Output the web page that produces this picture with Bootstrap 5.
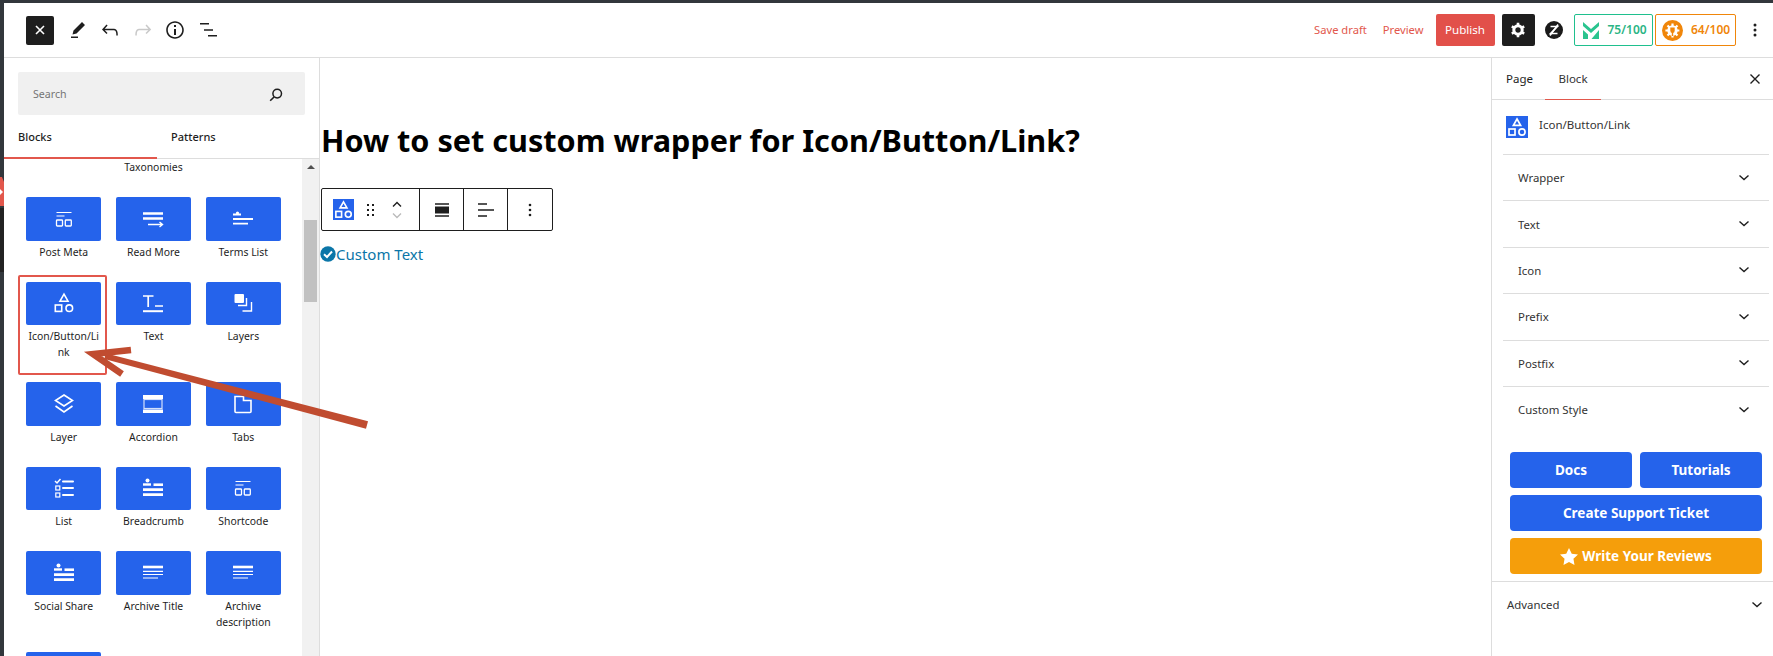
<!DOCTYPE html>
<html>
<head>
    <title>Icon/Button/Link - Editor</title>
    <link href="https://cdn.jsdelivr.net/npm/bootstrap@5.3.2/dist/css/bootstrap.min.css" rel="stylesheet">
    <style>
        html, body { height: 656px; overflow: hidden; }
        body { background: #32373c; font-family: "Noto Sans", "Liberation Sans", sans-serif; color: #1e1e1e; font-size: 12px; }
        .shell { height: 656px; position: relative; }
        .edge { width: 4px; flex: none; padding-top: 174px; }
        .edge svg { display: block; }
        .frame { background: #fff; margin-top: 3px; min-width: 0; height: 653px; }

        .topbar { height: 55px; border-bottom: 1px solid #ddd; flex: none; }
        .close-x { width: 28px; height: 29px; background: #1e1e1e; border-radius: 2px; margin: 0 12px 0 22px; }
        .tool-gap { gap: 8.4px; }
        .save-link { color: #e2574c; font-size: 11.2px; }
        .save-link.first { margin-right: 16px; }
        .save-link.second { margin-right: 12px; }
        .btn.publish { background: #e2504a; color: #fff; border: 0; width: 59px; height: 32px; padding: 0; font-size: 11.6px; border-radius: 2px; }
        .gear-btn { width: 33px; height: 32px; background: #1e1e1e; border-radius: 2px; margin-left: 7px; }
        .zeta { margin: 0 11px 0 10px; }
        .score { height: 32px; border-radius: 2px; font-weight: 600; font-size: 12px; background: #fff; border: 1px solid; }
        .score.green { width: 79px; color: #2bb585; border-color: #1fc08e; margin-right: 2.5px; padding-left: 8px; gap: 9px; }
        .score.orange { width: 81px; color: #f0860a; border-color: #f0860a; padding-left: 6px; gap: 8px; }
        .dots { width: 37px; }

        .inserter { width: 316px; flex: none; border-right: 1px solid #ddd; }
        .search-box { margin: 14px 14px 0 14px; height: 43px; background: #f0f0f0; border-radius: 2px; padding: 2px 22px 0 15px; color: #757575; font-size: 10.6px; }
        .ins-tabs { height: 44px; border-bottom: 1px solid #ddd; }
        .ins-tab { width: 153px; padding: 14px 0 0 14px; font-size: 11px; font-weight: 500; height: 44px; color: #1e1e1e; }
        .ins-tab.on { border-bottom: 2px solid #e2574c; }
        .ins-body { min-height: 0; }
        .blk-scroll { flex: 1; overflow: hidden; padding: 0 0 0 22px; }
        .blk-grid { display: grid; grid-template-columns: 75.4px 75.4px 75.4px; column-gap: 14.4px; row-gap: 21px; align-items: start; }
        .blk-tile { height: 43.5px; background: #2563eb; border-radius: 2px; }
        .blk-lbl { font-size: 10.4px; line-height: 16px; text-align: center; margin-top: 3px; height: auto; color: #1e1e1e; }
        .blk-item { padding-bottom: 1px; }
        .blk-first { margin-top: 0; height: 17px; }
        .blk-item.picked { position: relative; }
        .blk-item.picked::after { content: ""; position: absolute; left: -8px; top: -7px; width: 89px; height: 100px; border: 2px solid #e2574c; border-radius: 2px; }
        .vbar { width: 17px; flex: none; background: #f1f1f1; }
        .vbar .up { width: 0; height: 0; border: 4px solid transparent; border-top: 0; border-bottom: 4px solid #505050; margin: 6px auto 0; }
        .vbar .thumb { width: 13px; height: 82px; background: #c1c1c1; margin: 51px auto 0; }

        .canvas { min-width: 0; }
        .post-title { font-size: 30.6px; font-weight: 700; color: #000; margin: 61px 0 0 1px; line-height: 42px; }
        .blk-toolbar { margin: 27px 0 0 1px; width: 232px; height: 43px; border: 1px solid #1e1e1e; border-radius: 2px; }
        .blk-toolbar > div { border-right: 1px solid #1e1e1e; height: 100%; }
        .blk-toolbar > div:last-child { border-right: 0; }
        .tb-main { width: 98px; padding-left: 11px; }
        .tb-cell { width: 44px; }
        .grip { margin-left: 12px; }
        .arrows { width: 12px; margin-left: 15px; }
        .arrows svg { display: block; }
        .custom-txt { color: #0b76a8; font-size: 15px; margin: 13px 0 0 0; line-height: 20px; }

        .sidepanel { width: 282px; flex: none; border-left: 1px solid #ddd; }
        .side-tabs { height: 42px; border-bottom: 1px solid #ddd; flex: none; }
        .side-tab { font-size: 11.5px; height: 42px; padding-top: 12px; color: #1e1e1e; }
        .side-tab.page { margin-left: 14px; width: 39px; }
        .side-tab.blockt { width: 56px; text-align: center; border-bottom: 1.5px solid #e2574c; color: #333; }
        .side-close { margin: 0 6px 0 auto; }
        .blk-card { height: 54px; gap: 11px; padding: 0 0 0 14px; font-size: 11.5px; color: #333; }
        .blk-card span { margin-bottom: 4px; }
        .acc-row { height: 46.4px; margin: 0 4px 0 11px; border-top: 1px solid #ddd; padding: 0 19px 0 15px; font-size: 11.4px; color: #333; }
        .help-btns { padding: 0 11px 0 18px; margin-top: 20px; gap: 7px; }
        .btn.blue-btn { background: #2563eb; color: #fff; border: 0; font-size: 13.5px; font-weight: 700; height: 36px; padding: 0; border-radius: 4px; }
        .btn.amber-btn { background: #f59e0b; color: #fff; border: 0; font-size: 13.5px; font-weight: 700; height: 36px; padding: 0; border-radius: 4px; }
        .adv-row { margin-top: 7px; border-top: 1px solid #ddd; height: 46px; padding: 0 10px 0 15px; font-size: 11.4px; color: #333; }

        .big-arrow { position: absolute; left: 0; top: 0; pointer-events: none; }
    </style>
</head>
<body>
    <svg width="0" height="0" class="position-absolute">
        <defs>
            <symbol id="i-shapes" viewBox="0 0 24 24"><path d="M12 3.2 16 10.2H8Z" fill="none" stroke="#fff" stroke-width="1.6"/><rect x="3.3" y="14" width="6.4" height="6.4" fill="none" stroke="#fff" stroke-width="1.6"/><circle cx="17.3" cy="17.2" r="3.3" fill="none" stroke="#fff" stroke-width="1.6"/></symbol>
            <symbol id="i-meta" viewBox="0 0 24 24"><path d="M4.5 5.5h15M4.5 9h8" stroke="#fff" stroke-width="1.2"/><rect x="4.5" y="13" width="6" height="6" rx=".8" fill="none" stroke="#fff" stroke-width="1.3"/><rect x="13.3" y="13" width="6" height="6" rx=".8" fill="none" stroke="#fff" stroke-width="1.3"/></symbol>
            <symbol id="i-more" viewBox="0 0 24 24"><path d="M2 6.5h20M2 11.5h20" stroke="#fff" stroke-width="2.4"/><path d="M7 17.5h14M18.5 15l3 2.5-3 2.5" fill="none" stroke="#fff" stroke-width="1.4"/></symbol>
            <symbol id="i-terms" viewBox="0 0 24 24"><circle cx="6.5" cy="6" r="1.6" fill="#fff"/><path d="M2 7.500h8M2 12h20M2 16.7h15" stroke="#fff" stroke-width="1.8"/></symbol>
            <symbol id="i-text" viewBox="0 0 24 24"><path d="M2 5h10.500M7.200 5v11M14 15h8" stroke="#fff" stroke-width="1.7" fill="none"/><path d="M2 20.200h20" stroke="#fff" stroke-width="2"/></symbol>
            <symbol id="i-layers" viewBox="0 0 24 24"><rect x="3.500" y="3" width="9.500" height="9" rx="1" fill="#fff"/><path d="M15.500 7v7.500H7" fill="none" stroke="#fff" stroke-width="1.4"/><path d="M20.500 11v9H11.500" fill="none" stroke="#fff" stroke-width="1.4"/></symbol>
            <symbol id="i-layer" viewBox="0 0 24 24"><path d="M12 3 20.500 8.500 12 14 3.500 8.500Z" fill="none" stroke="#fff" stroke-width="1.6"/><path d="M3.500 14 12 20l8.500-6" fill="none" stroke="#fff" stroke-width="1.6"/></symbol>
            <symbol id="i-accordion" viewBox="0 0 24 24"><rect x="2" y="3" width="20" height="4" fill="#fff"/><rect x="3" y="7.500" width="18" height="9" fill="none" stroke="#fff" stroke-width="1.2" opacity=".8"/><rect x="2" y="17.500" width="20" height="3.500" fill="#fff"/></symbol>
            <symbol id="i-tabs" viewBox="0 0 24 24"><path d="M4 4.500h8.500v4h7.500v11c0 .6-.4 1-1 1H5c-.6 0-1-.4-1-1Z" fill="none" stroke="#fff" stroke-width="1.6"/></symbol>
            <symbol id="i-list" viewBox="0 0 24 24"><path d="M3 5l2 2 3.500-4" fill="none" stroke="#fff" stroke-width="1.5"/><rect x="3.800" y="10" width="4" height="4" fill="none" stroke="#fff" stroke-width="1.2"/><rect x="3.800" y="17" width="4" height="4" fill="none" stroke="#fff" stroke-width="1.2"/><path d="M11 5.500h10M11 12h10M11 19h10" stroke="#fff" stroke-width="2" stroke-linecap="round"/></symbol>
            <symbol id="i-crumb" viewBox="0 0 24 24"><circle cx="6.500" cy="4.500" r="2" fill="#fff"/><path d="M2 8.500h8" stroke="#fff" stroke-width="2.4"/><path d="M12.500 8.700H22" stroke="#fff" stroke-width="2.6"/><path d="M2 13.600h20M2 18.600h20" stroke="#fff" stroke-width="2.6"/></symbol>
            <symbol id="i-archive" viewBox="0 0 24 24"><path d="M2 6h20" stroke="#fff" stroke-width="2.6"/><path d="M2 10.300h20M2 13.500h20M2 17h15" stroke="#fff" stroke-width="1.2"/></symbol>
            <symbol id="i-chev" viewBox="0 0 12 8"><path d="M1.500 1.500 6 5.500l4.500-4" fill="none" stroke="#1e1e1e" stroke-width="1.4"/></symbol>
            <symbol id="i-shapes-blue" viewBox="0 0 22 22"><rect width="22" height="22" fill="#2563eb"/><path d="M11 3 14.600 9.300H7.400Z" fill="none" stroke="#fff" stroke-width="1.7"/><rect x="3" y="13" width="6" height="6" fill="none" stroke="#fff" stroke-width="1.7"/><circle cx="16" cy="16" r="3.100" fill="none" stroke="#fff" stroke-width="1.7"/></symbol>
        </defs>
    </svg>

    <div class="shell d-flex">
        <div class="edge">
            <svg width="4" height="98" viewBox="0 0 4 98"><path d="M0 3h2L4 8v24H0Z" fill="#e2574c"/><path d="M0 15l3 3-3 3Z" fill="#fff"/><rect y="34" width="4" height="64" fill="#222"/></svg>
        </div>
        <div class="frame flex-grow-1 d-flex flex-column">
            <div class="topbar d-flex align-items-center">
                <div class="close-x d-flex align-items-center justify-content-center">
                    <svg width="10" height="10" viewBox="0 0 10 10"><path d="M1 1l8 8M9 1l-8 8" stroke="#fff" stroke-width="1.6"/></svg>
                </div>
                <div class="d-flex align-items-center tool-gap">
                    <svg width="24" height="24" viewBox="0 0 24 24"><path fill="#1e1e1e" d="m19 7-3-3-8.500 8.500-1 4 4-1L19 7Zm-7 11.500H5V20h7v-1.500Z"/></svg>
                    <svg width="24" height="24" viewBox="0 0 24 24"><path fill="#1e1e1e" d="M18.300 11.700c-.6-.6-1.400-.9-2.300-.9H6.700l2.900-3.300-1.100-1-4.500 5L8.500 16l1-1-2.700-2.700H16c.5 0 .9.2 1.300.5 1 1 1 3.400 1 4.500v.3h1.500v-.2c0-1.500 0-4.300-1.500-5.700z"/></svg>
                    <svg width="24" height="24" viewBox="0 0 24 24"><path fill="#c9c9c9" d="M15.600 6.500l-1.100 1 2.900 3.300H8c-.9 0-1.700.3-2.300.9-1.400 1.500-1.400 4.200-1.400 5.600v.2h1.500v-.3c0-1.100 0-3.500 1-4.500.3-.3.7-.5 1.300-.5h9.200L14.500 15l1.100 1.100 4.600-4.600-4.600-5z"/></svg>
                    <svg width="24" height="24" viewBox="0 0 24 24"><path fill="#1e1e1e" d="M12 3.200c-4.800 0-8.800 3.900-8.800 8.800 0 4.800 3.900 8.800 8.800 8.800 4.800 0 8.800-3.900 8.800-8.800 0-4.800-4-8.800-8.800-8.800zm0 16c-4 0-7.200-3.300-7.200-7.200C4.800 8 8 4.800 12 4.800s7.200 3.300 7.200 7.200c0 4-3.200 7.200-7.200 7.200zM11 17h2v-6h-2v6zm0-8h2V7h-2v2z"/></svg>
                    <svg width="24" height="24" viewBox="0 0 24 24"><path d="M4 5.800h9M8 12h9M12 17.800h9" stroke="#1e1e1e" stroke-width="1.5"/></svg>
                </div>
                <div class="ms-auto d-flex align-items-center">
                    <span class="save-link first">Save draft</span>
                    <span class="save-link second">Preview</span>
                    <button class="btn publish">Publish</button>
                    <div class="gear-btn d-flex align-items-center justify-content-center">
                        <svg width="16" height="16" viewBox="0 0 16 16"><circle cx="8" cy="8" r="4.200" fill="none" stroke="#fff" stroke-width="3"/><path d="M8 .8v2.600M8 12.600v2.600M1.800 4.400l2.200 1.300M12 10.300l2.200 1.300M1.800 11.600 4 10.300M12 5.700l2.200-1.300" stroke="#fff" stroke-width="2.600"/></svg>
                    </div>
                    <svg class="zeta" width="18" height="18" viewBox="0 0 18 18"><circle cx="9" cy="9" r="9" fill="#1a1a1a"/><path d="M5.500 5.500h7L5.500 12.500h7" fill="none" stroke="#fff" stroke-width="1.500"/><path d="M13 3.500 5 14.500" stroke="#fff" stroke-width="1.500"/></svg>
                    <div class="score green d-flex align-items-center">
                        <svg width="16" height="17" viewBox="0 0 16 17"><path d="M0 0 8 7l8-7v4l-8 7-8-7Z" fill="#2ac48f"/><path d="M0 8l5 4.500V17H0ZM16 8v9H8.500Z" fill="#2ac48f"/></svg>
                        <span>75/100</span>
                    </div>
                    <div class="score orange d-flex align-items-center">
                        <svg width="21" height="21" viewBox="0 0 21 21"><circle cx="10.500" cy="10.500" r="10.500" fill="#f0860a"/><circle cx="10.500" cy="10.500" r="5.200" fill="#fff"/><path d="M10.500 3.400v14M3.400 10.500h14M5.500 5.500l10 10M15.500 5.500l-10 10" stroke="#fff" stroke-width="2.200"/><path d="M8.300 7.500v3.300a2.200 2.200 0 0 0 4.400 0V7.500Z" fill="#f0860a"/><path d="M10.500 12v4" stroke="#f0860a" stroke-width="1.400"/></svg>
                        <span>64/100</span>
                    </div>
                    <div class="dots d-flex justify-content-center">
                        <svg width="4" height="14" viewBox="0 0 4 14"><circle cx="2" cy="2" r="1.500" fill="#1e1e1e"/><circle cx="2" cy="7" r="1.500" fill="#1e1e1e"/><circle cx="2" cy="12" r="1.500" fill="#1e1e1e"/></svg>
                    </div>
                </div>
            </div>

            <div class="d-flex flex-grow-1 overflow-hidden">
                <div class="inserter d-flex flex-column">
                    <div class="search-box d-flex align-items-center justify-content-between flex-shrink-0">
                        <span>Search</span>
                        <svg width="14" height="14" viewBox="0 0 14 14"><circle cx="8.200" cy="5.600" r="4.300" fill="none" stroke="#1e1e1e" stroke-width="1.500"/><path d="M5 9 1.200 12.800" stroke="#1e1e1e" stroke-width="1.600"/></svg>
                    </div>
                    <div class="ins-tabs d-flex flex-shrink-0">
                        <div class="ins-tab on">Blocks</div>
                        <div class="ins-tab">Patterns</div>
                    </div>
                    <div class="ins-body d-flex flex-grow-1">
                        <div class="blk-scroll">
                            <div class="blk-grid">
                                <div></div><div class="blk-lbl blk-first">Taxonomies</div><div></div>
                                <div class="blk-item"><div class="blk-tile d-flex align-items-center justify-content-center"><svg width="24" height="24"><use href="#i-meta"/></svg></div><div class="blk-lbl">Post Meta</div></div>
                                <div class="blk-item"><div class="blk-tile d-flex align-items-center justify-content-center"><svg width="24" height="24"><use href="#i-more"/></svg></div><div class="blk-lbl">Read More</div></div>
                                <div class="blk-item"><div class="blk-tile d-flex align-items-center justify-content-center"><svg width="24" height="24"><use href="#i-terms"/></svg></div><div class="blk-lbl">Terms List</div></div>

                                <div class="blk-item picked"><div class="blk-tile d-flex align-items-center justify-content-center"><svg width="24" height="24"><use href="#i-shapes"/></svg></div><div class="blk-lbl">Icon/Button/Li<br>nk</div></div>
                                <div class="blk-item"><div class="blk-tile d-flex align-items-center justify-content-center"><svg width="24" height="24"><use href="#i-text"/></svg></div><div class="blk-lbl">Text</div></div>
                                <div class="blk-item"><div class="blk-tile d-flex align-items-center justify-content-center"><svg width="24" height="24"><use href="#i-layers"/></svg></div><div class="blk-lbl">Layers</div></div>

                                <div class="blk-item"><div class="blk-tile d-flex align-items-center justify-content-center"><svg width="24" height="24"><use href="#i-layer"/></svg></div><div class="blk-lbl">Layer</div></div>
                                <div class="blk-item"><div class="blk-tile d-flex align-items-center justify-content-center"><svg width="24" height="24"><use href="#i-accordion"/></svg></div><div class="blk-lbl">Accordion</div></div>
                                <div class="blk-item"><div class="blk-tile d-flex align-items-center justify-content-center"><svg width="24" height="24"><use href="#i-tabs"/></svg></div><div class="blk-lbl">Tabs</div></div>

                                <div class="blk-item"><div class="blk-tile d-flex align-items-center justify-content-center"><svg width="24" height="24"><use href="#i-list"/></svg></div><div class="blk-lbl">List</div></div>
                                <div class="blk-item"><div class="blk-tile d-flex align-items-center justify-content-center"><svg width="24" height="24"><use href="#i-crumb"/></svg></div><div class="blk-lbl">Breadcrumb</div></div>
                                <div class="blk-item"><div class="blk-tile d-flex align-items-center justify-content-center"><svg width="24" height="24"><use href="#i-meta"/></svg></div><div class="blk-lbl">Shortcode</div></div>

                                <div class="blk-item"><div class="blk-tile d-flex align-items-center justify-content-center"><svg width="24" height="24"><use href="#i-crumb"/></svg></div><div class="blk-lbl">Social Share</div></div>
                                <div class="blk-item"><div class="blk-tile d-flex align-items-center justify-content-center"><svg width="24" height="24"><use href="#i-archive"/></svg></div><div class="blk-lbl">Archive Title</div></div>
                                <div class="blk-item"><div class="blk-tile d-flex align-items-center justify-content-center"><svg width="24" height="24"><use href="#i-archive"/></svg></div><div class="blk-lbl">Archive<br>description</div></div>

                                <div class="blk-item"><div class="blk-tile"></div></div>
                            </div>
                        </div>
                        <div class="vbar"><div class="up"></div><div class="thumb"></div></div>
                    </div>
                </div>

                <div class="canvas flex-grow-1">
                    <div class="post-title">How to set custom wrapper for Icon/Button/Link?</div>
                    <div class="blk-toolbar d-flex">
                        <div class="tb-main d-flex align-items-center">
                            <svg width="21" height="21"><use href="#i-shapes-blue"/></svg>
                            <svg class="grip" width="10" height="14" viewBox="0 0 10 14"><g fill="#1e1e1e"><rect x="1" y="1" width="2" height="2"/><rect x="6" y="1" width="2" height="2"/><rect x="1" y="6" width="2" height="2"/><rect x="6" y="6" width="2" height="2"/><rect x="1" y="11" width="2" height="2"/><rect x="6" y="11" width="2" height="2"/></g></svg>
                            <div class="arrows">
                                <svg width="12" height="8" viewBox="0 0 12 8"><path d="M2 6.500 6 2.500l4 4" fill="none" stroke="#1e1e1e" stroke-width="1.400"/></svg>
                                <svg class="mt-1" width="12" height="8" viewBox="0 0 12 8"><path d="M2 1.500 6 5.500l4-4" fill="none" stroke="#bbb" stroke-width="1.400"/></svg>
                            </div>
                        </div>
                        <div class="tb-cell d-flex align-items-center justify-content-center">
                            <svg width="14" height="14" viewBox="0 0 14 14"><path d="M0 1h14M0 13h14" stroke="#1e1e1e" stroke-width="1.400"/><rect y="3.500" width="14" height="7" fill="#1e1e1e"/></svg>
                        </div>
                        <div class="tb-cell d-flex align-items-center justify-content-center">
                            <svg width="16" height="14" viewBox="0 0 16 14"><path d="M0 1h9M0 7h16M0 13h9" stroke="#1e1e1e" stroke-width="1.300"/></svg>
                        </div>
                        <div class="tb-cell d-flex align-items-center justify-content-center">
                            <svg width="4" height="14" viewBox="0 0 4 14"><circle cx="2" cy="2" r="1.300" fill="#1e1e1e"/><circle cx="2" cy="7" r="1.300" fill="#1e1e1e"/><circle cx="2" cy="12" r="1.300" fill="#1e1e1e"/></svg>
                        </div>
                    </div>
                    <div class="custom-txt d-flex align-items-center">
                        <svg width="16" height="16" viewBox="0 0 16 16"><circle cx="8" cy="8" r="7.700" fill="#0b76a8"/><path d="M4 8.300 7 11l5-5.500" fill="none" stroke="#fff" stroke-width="2"/></svg>
                        <span>Custom Text</span>
                    </div>
                </div>

                <div class="sidepanel d-flex flex-column">
                    <div class="side-tabs d-flex">
                        <div class="side-tab page">Page</div>
                        <div class="side-tab blockt">Block</div>
                        <div class="side-close align-self-center">
                            <svg width="24" height="24" viewBox="0 0 24 24"><path d="M7.500 7.500l9 9M16.500 7.500l-9 9" stroke="#1e1e1e" stroke-width="1.400"/></svg>
                        </div>
                    </div>
                    <div class="blk-card d-flex align-items-center">
                        <svg width="22" height="22"><use href="#i-shapes-blue"/></svg>
                        <span>Icon/Button/Link</span>
                    </div>
                    <div class="acc-row d-flex align-items-center justify-content-between"><span>Wrapper</span><svg width="12" height="8"><use href="#i-chev"/></svg></div>
                    <div class="acc-row d-flex align-items-center justify-content-between"><span>Text</span><svg width="12" height="8"><use href="#i-chev"/></svg></div>
                    <div class="acc-row d-flex align-items-center justify-content-between"><span>Icon</span><svg width="12" height="8"><use href="#i-chev"/></svg></div>
                    <div class="acc-row d-flex align-items-center justify-content-between"><span>Prefix</span><svg width="12" height="8"><use href="#i-chev"/></svg></div>
                    <div class="acc-row d-flex align-items-center justify-content-between"><span>Postfix</span><svg width="12" height="8"><use href="#i-chev"/></svg></div>
                    <div class="acc-row d-flex align-items-center justify-content-between"><span>Custom Style</span><svg width="12" height="8"><use href="#i-chev"/></svg></div>
                    <div class="help-btns d-flex flex-column">
                        <div class="d-flex gap-2">
                            <button class="btn blue-btn flex-fill w-50">Docs</button>
                            <button class="btn blue-btn flex-fill w-50">Tutorials</button>
                        </div>
                        <button class="btn blue-btn w-100">Create Support Ticket</button>
                        <button class="btn amber-btn w-100 d-flex align-items-center justify-content-center gap-1">
                            <svg width="18" height="17" viewBox="0 0 17 16"><path d="M8.500 0l2.600 5.300 5.900.8-4.300 4.100 1 5.800-5.200-2.800L3.300 16l1-5.800L0 6.100l5.900-.8Z" fill="#fff"/></svg>
                            <span>Write Your Reviews</span>
                        </button>
                    </div>
                    <div class="adv-row d-flex align-items-center justify-content-between"><span>Advanced</span><svg width="12" height="8"><use href="#i-chev"/></svg></div>
                </div>
            </div>
        </div>

        <svg class="big-arrow" width="400" height="440" viewBox="0 0 400 440">
            <path d="M368 421.300 366 428.700 104.400 359 105.600 353.200Z" fill="#c04c30"/>
            <path d="M131 350 93 354 122 374" stroke="#c04c30" stroke-width="6.500" fill="none"/>
        </svg>
    </div>
</body>
</html>
